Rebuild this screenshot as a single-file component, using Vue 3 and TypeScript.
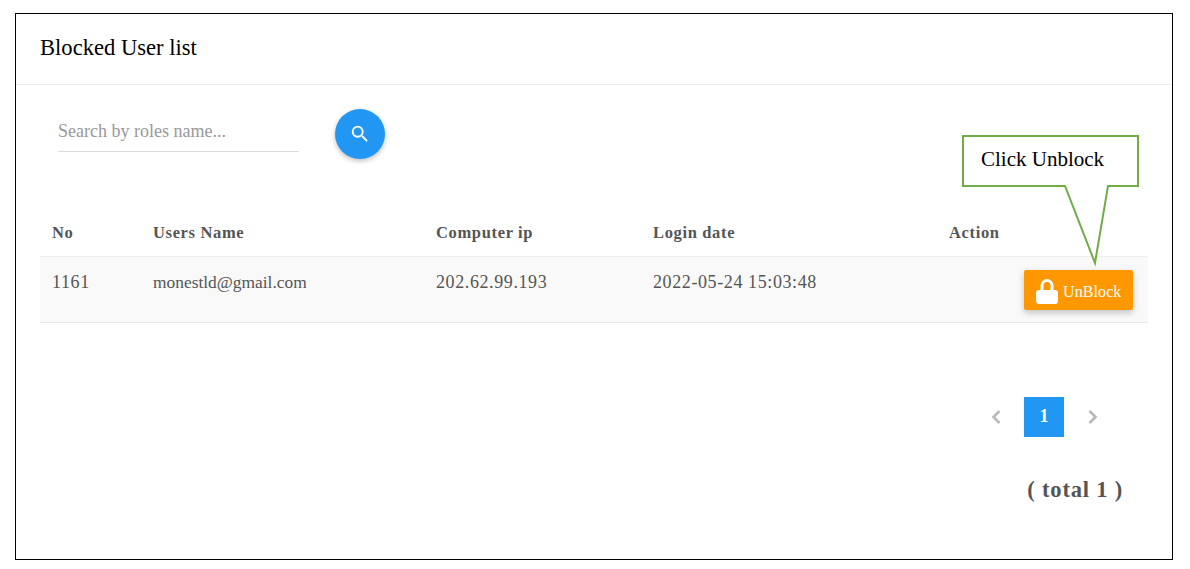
<script setup lang="ts">
interface BlockedUser { no: number; name: string; ip: string; date: string }
const columns: string[] = ['No', 'Users Name', 'Computer ip', 'Login date', 'Action']
const users: BlockedUser[] = [
  { no: 1161, name: 'monestld@gmail.com', ip: '202.62.99.193', date: '2022-05-24 15:03:48' },
]
</script>

<template>
  <div class="page">
    <div class="frame">
      <header class="head"><h1>Blocked User list</h1></header>
      <div class="body">
        <div class="search">
          <input class="field" type="text" placeholder="Search by roles name..." />
          <button class="round" type="button" aria-label="Search">
            <svg width="22" height="22" viewBox="0 0 24 24" fill="#fff">
              <path d="M15.5 14h-.79l-.28-.27A6.47 6.47 0 0 0 16 9.5 6.5 6.5 0 1 0 9.5 16c1.61 0 3.09-.59 4.23-1.57l.27.28v.79l5 4.99L20.49 19l-4.99-5zm-6 0C7.01 14 5 11.99 5 9.5S7.01 5 9.5 5 14 7.01 14 9.5 11.99 14 9.5 14z" />
            </svg>
          </button>
        </div>
        <table class="grid">
          <colgroup>
            <col class="c1" /><col class="c2" /><col class="c3" /><col class="c4" /><col />
          </colgroup>
          <thead>
            <tr><th v-for="c in columns" :key="c">{{ c }}</th></tr>
          </thead>
          <tbody>
            <tr v-for="u in users" :key="u.no">
              <td class="num">{{ u.no }}</td>
              <td class="mail">{{ u.name }}</td>
              <td class="num">{{ u.ip }}</td>
              <td class="num">{{ u.date }}</td>
              <td class="act">
                <button class="unblock" type="button">
                  <svg width="22" height="25" viewBox="0 0 22 25" fill="#fff">
                    <path fill-rule="evenodd" d="M4.500 11V6.500a6.500 6.500 0 0 1 13 0V11h1.500a3 3 0 0 1 3 3v8a3 3 0 0 1-3 3H3a3 3 0 0 1-3-3v-8a3 3 0 0 1 3-3h1.500zM7.500 11h7V6.500a3.500 3.500 0 0 0-7 0V11z" />
                  </svg>
                  <span>UnBlock</span>
                </button>
              </td>
            </tr>
          </tbody>
        </table>
        <nav class="pager">
          <svg width="12" height="16" viewBox="0 0 12 16" fill="none" stroke="#b9b9b9" stroke-width="2.600"><path d="M9.500 2 3.500 8l6 6" /></svg>
          <span class="cur">1</span>
          <svg width="12" height="16" viewBox="0 0 12 16" fill="none" stroke="#b9b9b9" stroke-width="2.600"><path d="M2.500 2l6 6-6 6" /></svg>
        </nav>
        <p class="total">( total 1 )</p>
      </div>
      <div class="callout">
        <svg width="178" height="132" viewBox="0 0 178 132">
          <path d="M1 1H176V51H146L133 128 103 51H1Z" fill="#fff" stroke="#70ad47" stroke-width="2" />
        </svg>
        <span>Click Unblock</span>
      </div>
    </div>
  </div>
</template>

<style>
html, body { margin: 0; background: #fff; }
</style>

<style scoped>
.page {
  width: 1190px;
  height: 569px;
  padding: 13px 0 0 15px;
  box-sizing: border-box;
  font-family: "Liberation Serif", serif;
}
.frame {
  position: relative;
  width: 1158px;
  height: 547px;
  box-sizing: border-box;
  border: 1px solid #000;
}
.head {
  height: 71px;
  box-sizing: border-box;
  border-bottom: 1px solid #eeeeee;
  padding: 0 24px 2px;
  display: flex;
  align-items: center;
}
.head h1 {
  margin: 0;
  font-size: 22.600px;
  font-weight: 400;
  color: #000;
}
.body { padding: 0 24px; }
.search {
  display: flex;
  align-items: flex-start;
  gap: 36px;
  padding: 24px 0 0 18px;
  height: 123px;
  box-sizing: border-box;
}
.field {
  width: 241px;
  height: 43px;
  box-sizing: border-box;
  border: none;
  border-bottom: 1px solid #dddddd;
  outline: none;
  padding: 2px 0 0;
  font: 18px "Liberation Serif", serif;
  color: #555;
  background: transparent;
}
.field::placeholder { color: #999; opacity: 1; }
.round {
  width: 50px;
  height: 50px;
  border: none;
  border-radius: 50%;
  background: #2196f3;
  box-shadow: 0 2px 5px rgba(0, 0, 0, 0.26);
  display: flex;
  align-items: center;
  justify-content: center;
  padding: 0;
}
.grid {
  width: 1108px;
  border-collapse: collapse;
  table-layout: fixed;
  color: #555;
}
.c1 { width: 101px; }
.c2 { width: 283px; }
.c3 { width: 217px; }
.c4 { width: 296px; }
th {
  height: 48px;
  padding: 2px 12px 0;
  box-sizing: border-box;
  text-align: left;
  font-size: 16.500px;
  font-weight: 700;
  letter-spacing: 0.650px;
}
td {
  height: 66px;
  padding: 0 12px 13px;
  box-sizing: border-box;
  font-size: 18px;
  background: #f9f9f9;
  border-top: 1px solid #efefef;
  border-bottom: 1px solid #e9e9e9;
}
td.num { letter-spacing: 0.600px; }
td.mail { font-size: 17.400px; }
td.act { padding: 2px 15px 0 0; text-align: right; }
.unblock {
  display: inline-flex;
  align-items: center;
  gap: 5px;
  width: 109px;
  height: 40px;
  box-sizing: border-box;
  padding: 3px 0 0 12px;
  border: none;
  border-radius: 2px;
  background: #ff9800;
  color: #fff;
  font: 16px "Liberation Serif", serif;
  letter-spacing: 0.100px;
  box-shadow: 0 3px 6px rgba(0, 0, 0, 0.22);
  vertical-align: middle;
}
.pager {
  display: flex;
  align-items: center;
  justify-content: flex-end;
  gap: 22px;
  margin-top: 74px;
  padding-right: 49px;
}
.cur {
  width: 40px;
  height: 40px;
  margin-right: 1px;
  display: flex;
  align-items: center;
  justify-content: center;
  background: #2196f3;
  color: #fff;
  font-weight: 700;
  font-size: 18px;
}
.total {
  margin: 40px 25px 0 0;
  text-align: right;
  font-size: 22.500px;
  font-weight: 700;
  color: #555;
  letter-spacing: 0.800px;
}
.callout {
  position: absolute;
  left: 946px;
  top: 121px;
  width: 178px;
  height: 132px;
}
.callout svg { display: block; }
.callout span {
  position: absolute;
  left: 19px;
  top: 12px;
  font-size: 21px;
  color: #000;
  white-space: nowrap;
}
</style>
